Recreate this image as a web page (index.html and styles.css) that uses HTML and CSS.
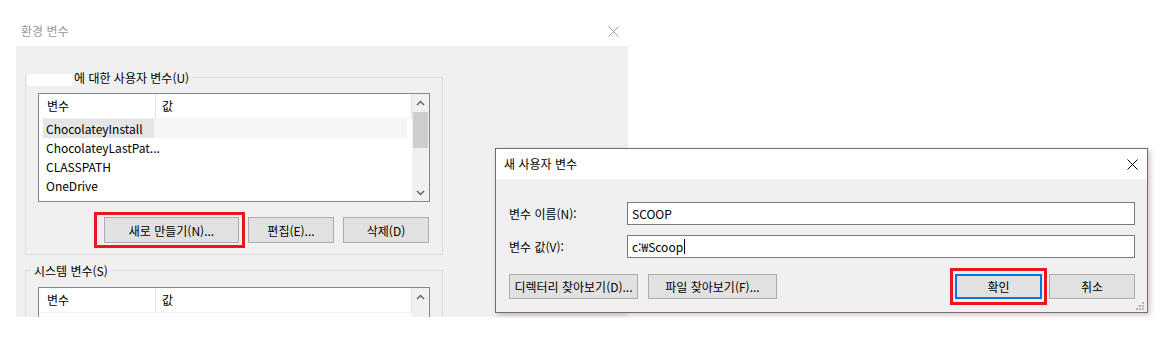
FILE: index.html
```html
<!DOCTYPE html>
<html lang="ko">
  <head>
    <meta charset="UTF-8" />
    <meta name="viewport" content="width=device-width, initial-scale=1.0" />
    <title>환경 변수</title>
    <link rel="stylesheet" href="styles.css">
  </head>
  <body>
    <div class="desktop">
      <div class="env-window">
        <div class="env-titlebar">
          <span class="env-title">환경 변수</span>
          <svg class="close-icon" width="11" height="11" viewBox="0 0 11 11">
            <path d="M0.5 0.5L10.5 10.5M10.5 0.5L0.5 10.5" stroke="#a0a0a0" stroke-width="1" />
          </svg>
        </div>
        <div class="env-body">
          <div class="group">
            <div class="group-title"><span class="redacted"></span>에 대한 사용자 변수(U)</div>
            <div class="var-list">
              <div class="list-main">
                <div class="list-header">
                  <div class="col-name">변수</div>
                  <div class="col-value">값</div>
                </div>
                <div class="row selected">
                  <div class="col-name">ChocolateyInstall</div>
                  <div class="col-value"></div>
                </div>
                <div class="row">
                  <div class="col-name">ChocolateyLastPat...</div>
                  <div class="col-value"></div>
                </div>
                <div class="row">
                  <div class="col-name">CLASSPATH</div>
                  <div class="col-value"></div>
                </div>
                <div class="row">
                  <div class="col-name">OneDrive</div>
                  <div class="col-value"></div>
                </div>
              </div>
              <div class="scrollbar">
                <div class="scroll-arrow">
                  <svg width="9" height="6" viewBox="0 0 9 6"><path d="M1 5L4.5 1.5L8 5" fill="none" stroke="#606060" stroke-width="1.4" /></svg>
                </div>
                <div class="scroll-track">
                  <div class="scroll-thumb"></div>
                </div>
                <div class="scroll-arrow">
                  <svg width="9" height="6" viewBox="0 0 9 6"><path d="M1 1L4.5 4.5L8 1" fill="none" stroke="#606060" stroke-width="1.4" /></svg>
                </div>
              </div>
            </div>
            <div class="button-row">
              <span class="highlight highlight-new"><button class="btn btn-new">새로 만들기(N)...</button></span>
              <button class="btn btn-small">편집(E)...</button>
              <button class="btn btn-small">삭제(D)</button>
            </div>
          </div>

          <div class="group group-system">
            <div class="group-title">시스템 변수(S)</div>
            <div class="var-list var-list-system">
              <div class="list-main">
                <div class="list-header">
                  <div class="col-name">변수</div>
                  <div class="col-value">값</div>
                </div>
              </div>
              <div class="scrollbar">
                <div class="scroll-arrow">
                  <svg width="9" height="6" viewBox="0 0 9 6"><path d="M1 5L4.5 1.5L8 5" fill="none" stroke="#606060" stroke-width="1.4" /></svg>
                </div>
              </div>
            </div>
          </div>
        </div>
      </div>

      <div class="dialog">
        <div class="dialog-titlebar">
          <span class="dialog-title">새 사용자 변수</span>
          <svg class="close-icon" width="11" height="11" viewBox="0 0 11 11">
            <path d="M0.5 0.5L10.5 10.5M10.5 0.5L0.5 10.5" stroke="#000" stroke-width="1" />
          </svg>
        </div>
        <div class="dialog-body">
          <div class="field-row">
            <label class="field-label">변수 이름(N):</label>
            <div class="field-box">SCOOP</div>
          </div>
          <div class="field-row">
            <label class="field-label">변수 값(V):</label>
            <div class="field-box">c:₩Scoop<span class="caret"></span></div>
          </div>
          <div class="dialog-buttons">
            <button class="btn btn-browse">디렉터리 찾아보기(D)...</button>
            <button class="btn btn-browse">파일 찾아보기(F)...</button>
            <span class="spacer"></span>
            <span class="highlight highlight-ok"><button class="btn btn-ok">확인</button></span>
            <button class="btn btn-cancel">취소</button>
          </div>
        </div>
        <svg class="grip" width="8" height="8" viewBox="0 0 8 8">
          <rect x="6" y="0" width="2" height="2" fill="#b4b4b4" />
          <rect x="3" y="3" width="2" height="2" fill="#b4b4b4" />
          <rect x="6" y="3" width="2" height="2" fill="#b4b4b4" />
          <rect x="0" y="6" width="2" height="2" fill="#b4b4b4" />
          <rect x="3" y="6" width="2" height="2" fill="#b4b4b4" />
          <rect x="6" y="6" width="2" height="2" fill="#b4b4b4" />
        </svg>
      </div>
    </div>
  </body>
</html>
```

FILE: styles.css
```css
* {
  box-sizing: border-box;
}
body {
  margin: 0;
  background: #fff;
  font-family: "Noto Sans CJK KR", "Noto Sans", sans-serif;
  font-size: 12px;
  line-height: 16px;
  color: #000;
}
.desktop {
  position: relative;
  width: 1173px;
  height: 340px;
  overflow: hidden;
}

/* background window */
.env-window {
  width: 612px;
  margin-left: 16px;
}
.env-titlebar {
  display: flex;
  align-items: center;
  justify-content: space-between;
  height: 46px;
  padding: 16px 9px 0 5px;
}
.env-title {
  color: #9a9a9a;
}
.env-body {
  height: 271px;
  background: #f0f0f0;
  padding: 31px 0 0 9px;
  overflow: hidden;
}
.group {
  width: 418px;
  border: 1px solid #dcdcdc;
  padding: 0 12px 11px 12px;
}
.group-system {
  margin-top: 15px;
}
.group-title {
  width: fit-content;
  margin: -8px 0 0 -7px;
  padding: 0 3px;
  background: #f0f0f0;
}
.redacted {
  display: inline-block;
  width: 46px;
  height: 12px;
  margin-left: -7px;
  margin-right: 1px;
  vertical-align: middle;
  background: #fff;
  border-radius: 3px;
}
.var-list {
  display: flex;
  height: 109px;
  margin-top: 7px;
  border: 1px solid #828790;
  background: #fff;
}
.var-list-system {
  margin-top: 8px;
}
.list-main {
  flex: 1;
}
.list-header {
  display: flex;
  height: 25px;
  align-items: center;
  border-right: 1px solid #e5e5e5;
  border-bottom: 1px solid #f2f2f2;
}
.list-header .col-name {
  width: 117px;
  height: 100%;
  padding-left: 8px;
  display: flex;
  align-items: center;
  border-right: 1px solid #e5e5e5;
}
.list-header .col-value {
  padding-left: 6px;
}
.row {
  display: flex;
  height: 19px;
  margin: 0 5px 0 4px;
  align-items: center;
}
.row .col-name {
  width: 111px;
  height: 100%;
  padding-left: 3px;
  display: flex;
  align-items: center;
  white-space: nowrap;
}
.row .col-value {
  flex: 1;
  height: 100%;
}
.row.selected .col-name {
  background: #e5e5e5;
}
.row.selected .col-value {
  background: #f5f5f5;
}
.scrollbar {
  width: 17px;
  background: #f0f0f0;
  display: flex;
  flex-direction: column;
}
.scroll-arrow {
  height: 17px;
  display: flex;
  align-items: center;
  justify-content: center;
}
.scroll-track {
  flex: 1;
  padding: 1px 1px 0 1px;
}
.scroll-thumb {
  height: 36px;
  background: #cdcdcd;
}
.button-row {
  display: flex;
  justify-content: flex-end;
  gap: 9px;
  margin-top: 15px;
  padding-right: 1px;
}
.btn {
  height: 26px;
  padding: 0;
  background: #e1e1e1;
  border: 1px solid #adadad;
  font-family: inherit;
  font-size: 12px;
  color: #000;
}
.btn-new {
  width: 135px;
}
.btn-small {
  width: 86px;
}

/* red annotation boxes */
.highlight {
  position: relative;
  display: inline-flex;
}
.highlight::after {
  content: "";
  position: absolute;
  border: 3px solid #e8171f;
}
.highlight-new::after {
  left: -10px;
  right: -6px;
  top: -5px;
  bottom: -5px;
}
.highlight-ok::after {
  left: -5px;
  right: -5px;
  top: -6px;
  bottom: -6px;
}

/* new variable dialog */
.dialog {
  position: absolute;
  left: 495px;
  top: 148px;
  width: 653px;
  height: 165px;
  border: 1px solid #6f6f6f;
  background: #f0f0f0;
  box-shadow: 2px 2px 5px rgba(120, 80, 80, 0.35);
}
.dialog-titlebar {
  display: flex;
  align-items: center;
  justify-content: space-between;
  height: 30px;
  padding: 0 9px 0 8px;
  background: #fff;
}
.dialog-body {
  padding: 23px 12px 13px 13px;
}
.field-row {
  display: grid;
  grid-template-columns: 118px 1fr;
  align-items: center;
  margin-bottom: 10px;
}
.field-box {
  height: 23px;
  padding-left: 4px;
  display: flex;
  align-items: center;
  background: #fff;
  border: 1px solid #7a7a7a;
}
.caret {
  display: inline-block;
  width: 1px;
  height: 15px;
  margin-left: 1px;
  background: #000;
}
.dialog-buttons {
  display: flex;
  align-items: center;
  margin-top: 16px;
}
.dialog-buttons .btn {
  height: 25px;
}
.btn-browse {
  width: 129px;
  margin-right: 10px;
}
.spacer {
  flex: 1;
}
.btn-ok {
  width: 87px;
  border: 2px solid #0078d7;
}
.btn-cancel {
  width: 86px;
  margin-left: 7px;
}
.grip {
  position: absolute;
  right: 3px;
  bottom: 2px;
}
```
